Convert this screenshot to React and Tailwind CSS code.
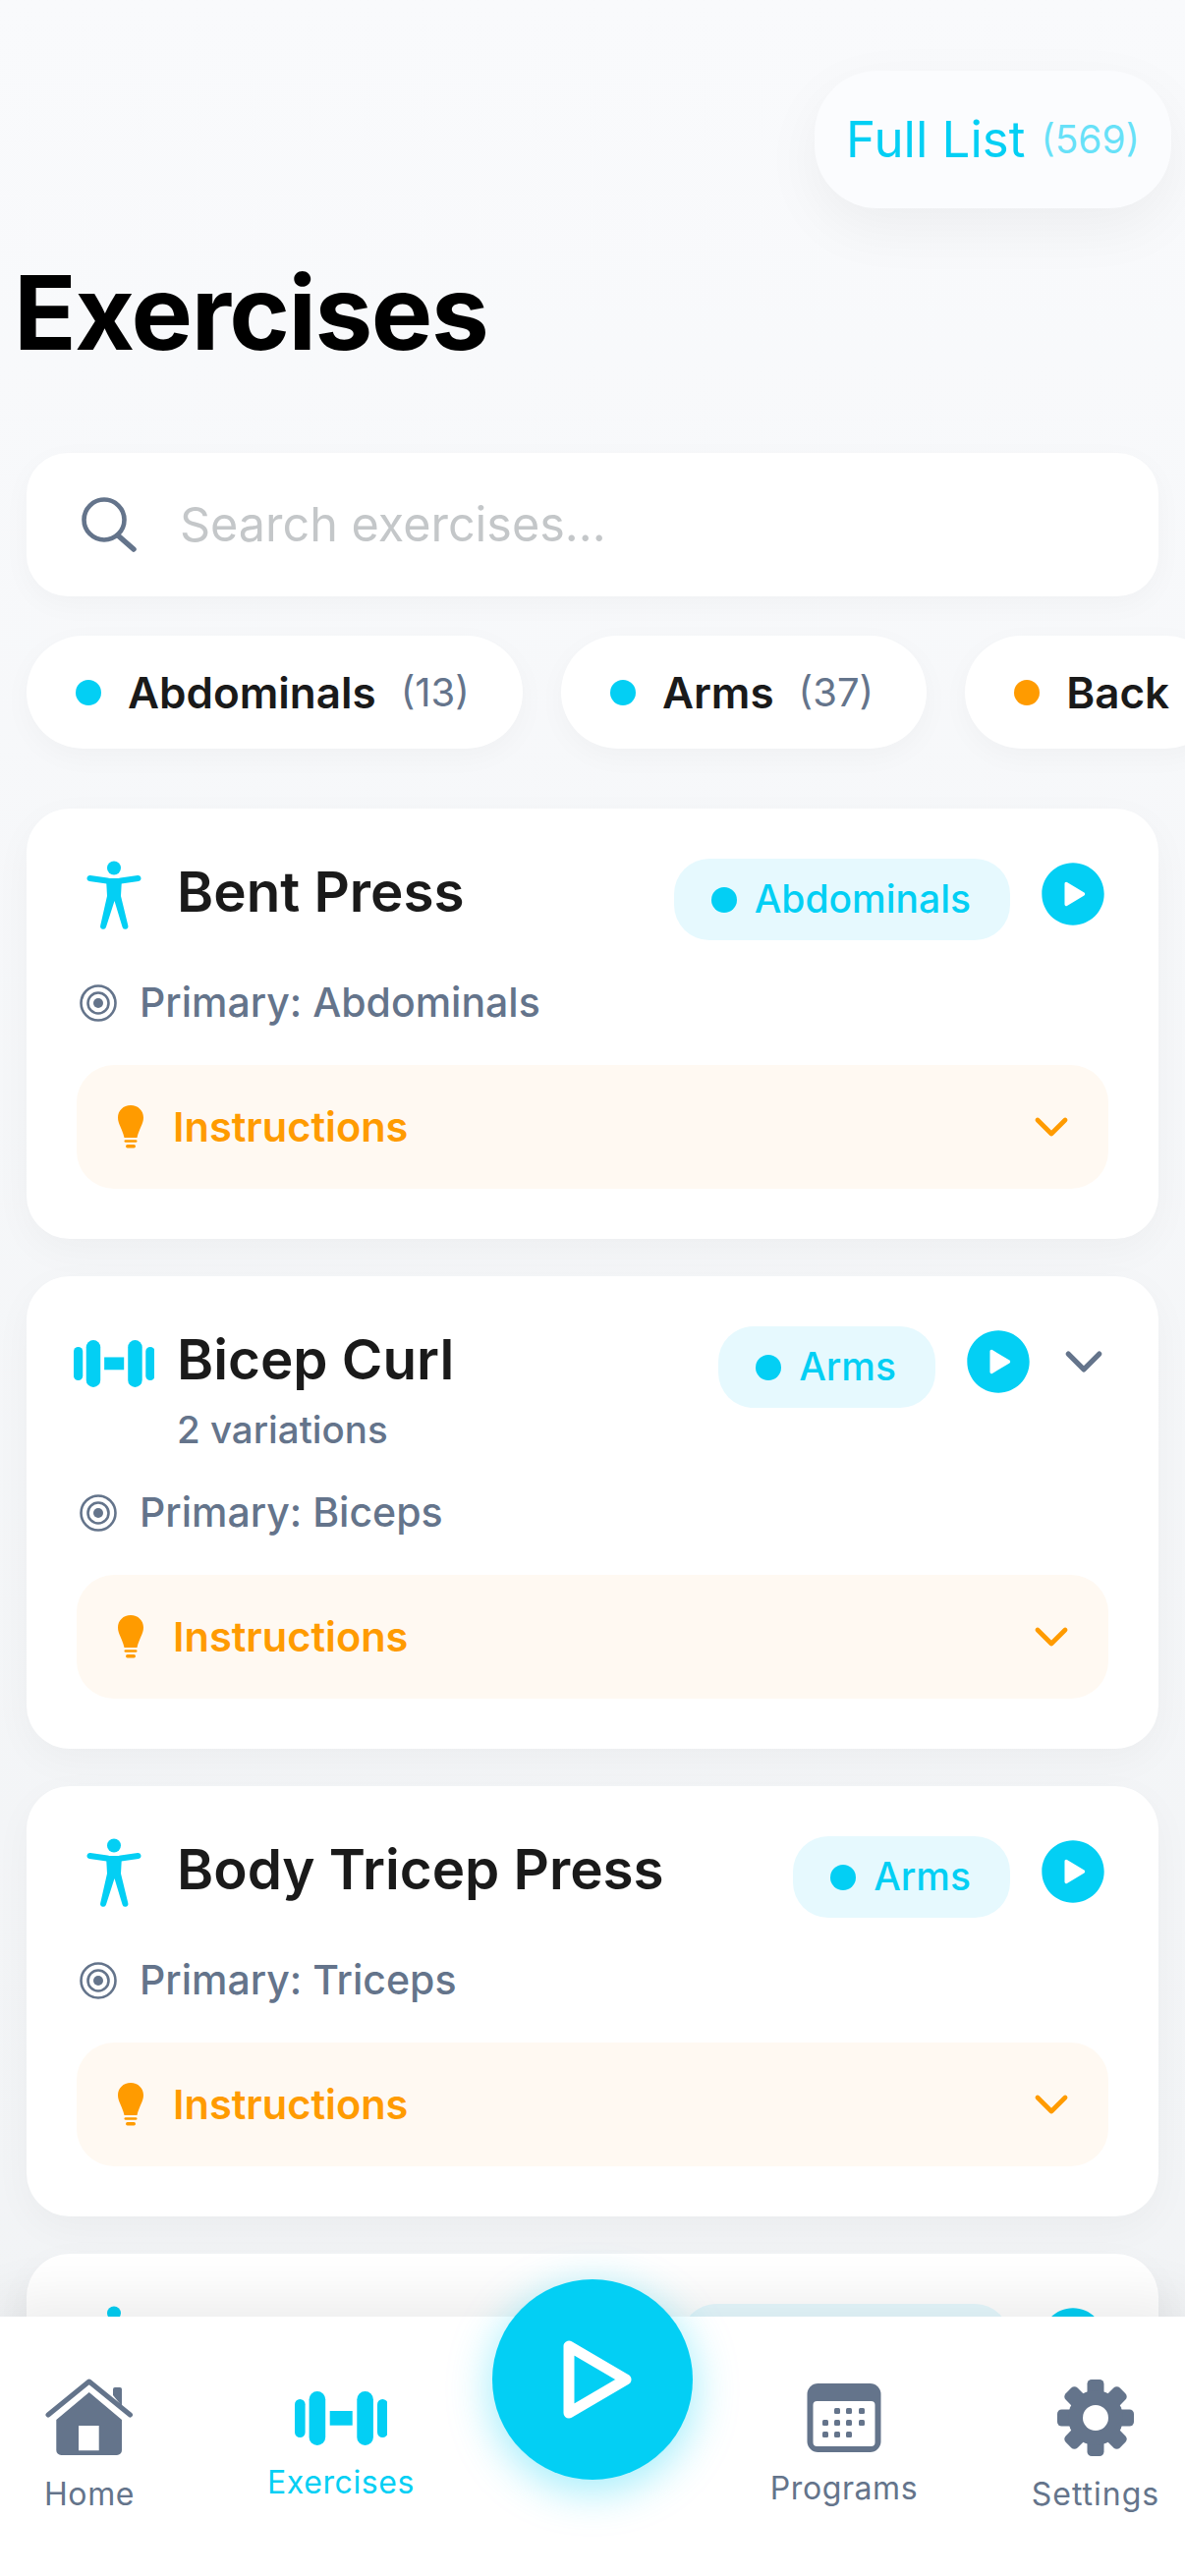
import { IoChevronDown, IoPlayCircle } from "react-icons/io5";

const CYAN = "#03cff4";
const SLATE = "#64748b";

const chips = [
  { name: "Abdominals", count: "(13)", dot: "bg-[#03cff4]" },
  { name: "Arms", count: "(37)", dot: "bg-[#03cff4]" },
  { name: "Back", count: "", dot: "bg-[#ff9b00]" },
];

const exercises = [
  { name: "Bent Press", icon: "body", muscle: "Abdominals", primary: "Abdominals" },
  { name: "Bicep Curl", icon: "barbell", muscle: "Arms", primary: "Biceps", variations: "2 variations" },
  { name: "Body Tricep Press", icon: "body", muscle: "Arms", primary: "Triceps" },
];

const TargetIcon = () => (
  <svg width="38" height="38" viewBox="0 0 38 38" fill="none" className="shrink-0">
    <circle cx="19" cy="19" r="17.5" stroke={SLATE} strokeWidth="2.6" />
    <circle cx="19" cy="19" r="10.5" stroke={SLATE} strokeWidth="2.6" />
    <circle cx="19" cy="19" r="5" fill={SLATE} />
  </svg>
);

const SearchIcon = () => (
  <svg width="56" height="56" viewBox="0 0 56 56" fill="none" stroke={SLATE} strokeWidth="4.6" strokeLinecap="round">
    <circle cx="23" cy="23" r="20.5" />
    <path d="M37 39 L53 53" strokeWidth="5.5" />
  </svg>
);

const BodyIcon = () => (
  <svg width="60" height="72" viewBox="0 0 60 72" fill={CYAN} className="shrink-0">
    <circle cx="30" cy="7.5" r="7" />
    <path d="M5.5 18 L23 20.5 M54.5 18 L37 20.5" stroke={CYAN} strokeWidth="6" strokeLinecap="round" />
    <path d="M22 18 L38 18 L37 36 L44.3 66 a3 3 0 0 1 -5.8 1.6 L30.5 41 L22 67.6 a3 3 0 0 1 -5.8 -1.6 L23 36 Z" />
  </svg>
);

const Dumbbell = ({ width, height }) => (
  <svg width={width} height={height} viewBox="0 0 94 55" fill={CYAN} className="shrink-0">
    <rect x="0" y="8" width="10.6" height="39" rx="5.3" />
    <rect x="14.6" y="0" width="16.6" height="55" rx="8.3" />
    <rect x="35.7" y="20" width="23" height="14.7" />
    <rect x="63.3" y="0" width="16.6" height="55" rx="8.3" />
    <rect x="84" y="8" width="10.6" height="39" rx="5.3" />
  </svg>
);

const BulbIcon = () => (
  <svg width="26" height="44" viewBox="0 0 26 44" fill="#ff9b00">
    <path d="M13 0 C5.5 0 0 5.5 0 12.5 C0 19 4.5 24 6.5 33 H19.5 C21.5 24 26 19 26 12.5 C26 5.5 20.5 0 13 0 Z" />
    <rect x="6.5" y="35.2" width="13" height="2.6" rx="1.3" />
    <rect x="8" y="40" width="10" height="3.4" rx="1.7" />
  </svg>
);

const HomeIcon = () => (
  <svg width="92" height="80" viewBox="0 0 92 80" fill={SLATE}>
    <path d="M4 37 L45.7 3 L87.5 37" fill="none" stroke={SLATE} strokeWidth="5" strokeLinecap="round" strokeLinejoin="round" />
    <path d="M70 17 V11 a2 2 0 0 1 2 -2 h5 a2 2 0 0 1 2 2 V28 Z" />
    <path
      fillRule="evenodd"
      d="M45.7 14 L79 42 V73 a5 5 0 0 1 -5 5 H17.3 a5 5 0 0 1 -5 -5 V42 Z M35 48 V73.3 H55.7 V48 Z"
    />
  </svg>
);

const CalendarIcon = () => (
  <svg width="76" height="70" viewBox="0 0 76 70">
    <rect x="0.5" y="0" width="75" height="70" rx="11" fill={SLATE} />
    <rect x="6.5" y="18" width="63" height="46" rx="4" fill="#fff" />
    {[
      [31, 28], [43, 28], [56, 28],
      [19, 40], [31, 40], [43, 40], [56, 40],
      [19, 52], [31, 52], [43, 52],
    ].map(([x, y]) => (
      <rect key={`${x}-${y}`} x={x - 3} y={y - 3} width="6" height="6" rx="1.5" fill={SLATE} />
    ))}
  </svg>
);

const GearIcon = () => (
  <svg width="78" height="80" viewBox="0 0 78 80" fill={SLATE}>
    {[0, 45, 90, 135, 180, 225, 270, 315].map((deg) => (
      <rect key={deg} x="30.5" y="1" width="17" height="20" rx="4.5" transform={`rotate(${deg} 39 40)`} />
    ))}
    <circle cx="39" cy="40" r="28" />
    <circle cx="39" cy="40" r="13" fill="#fff" />
  </svg>
);

const ExerciseIcon = ({ type }) => (
  <div className="w-[76px] h-[76px] shrink-0 flex items-center justify-center">
    {type === "barbell" ? <Dumbbell width={82} height={48} /> : <BodyIcon />}
  </div>
);

const Badge = ({ muscle }) => (
  <div className="h-[83px] pl-[38px] pr-[40px] rounded-[36px] bg-[#e6f9fe] flex items-center gap-[18px] shrink-0">
    <span className="w-[26px] h-[26px] rounded-full bg-[#03cff4]"></span>
    <span className="text-[39px] font-medium text-[#03cff4]">{muscle}</span>
  </div>
);

const ExerciseCard = ({ item }) => (
  <div className="bg-white rounded-[44px] px-[51px] pt-[51px] pb-[51px] shadow-[0_12px_40px_rgba(0,0,0,0.035)]">
    <div className="flex items-start">
      <ExerciseIcon type={item.icon} />
      <div className="ml-[26px] pt-[1px] flex-1 min-w-0">
        <div className="text-[56.5px] leading-[66px] font-semibold text-[#1a1a1a]">{item.name}</div>
        {item.variations && (
          <div className="mt-[16px] text-[38.5px] leading-[44px] font-medium text-[#64748b]">{item.variations}</div>
        )}
      </div>
      <Badge muscle={item.muscle} />
      <IoPlayCircle size={78} color={CYAN} className={`ml-[24.5px] -mt-[3px] shrink-0 ${item.variations ? "" : "-mr-[2.5px]"}`} />
      {item.variations && <IoChevronDown size={56} color={SLATE} className="ml-[20.5px] -mr-[3px] mt-[8px] shrink-0" />}
    </div>

    <div className={`${item.variations ? "mt-[39px]" : "mt-[40px]"} pl-[3px] flex items-center gap-[23px] h-[48px]`}>
      <TargetIcon />
      <span className="text-[41px] font-medium text-[#64748b]">Primary: {item.primary}</span>
    </div>

    <div className="mt-[39px] h-[126px] rounded-[38px] bg-[#fff9f2] pl-[42px] pr-[33px] flex items-center justify-between">
      <div className="flex items-center gap-[30px]">
        <BulbIcon />
        <span className="text-[41.5px] font-semibold text-[#ff9b00]">Instructions</span>
      </div>
      <IoChevronDown size={50} color="#ff9b00" />
    </div>
  </div>
);

const NavItem = ({ icon, label, labelClass }) => (
  <div className="w-[182px] h-[80px] flex flex-col items-center">
    <div className="h-[80px] flex items-center justify-center shrink-0">{icon}</div>
    <span className={labelClass}>{label}</span>
  </div>
);

export default function App() {
  return (
    <div className="relative w-[1206px] h-[2622px] overflow-hidden bg-gradient-to-b from-[#f9fafc] to-[#f1f3f5] font-['Inter',sans-serif]">
      <div className="flex justify-end pt-[72px] pr-[14px]">
        <div className="h-[140px] w-[363px] rounded-[64px] bg-[#fbfcfe] shadow-[0_20px_60px_rgba(0,0,0,0.05)] flex items-center justify-center gap-[16px]">
          <span className="text-[51px] text-[#03cff4]">Full List</span>
          <span className="text-[39px] text-[#03cff4]/60">(569)</span>
        </div>
      </div>

      <h1 className="mt-[43px] ml-[14px] text-[105px] leading-[126px] font-bold text-black tracking-[-1.5px]">Exercises</h1>

      <div className="mt-[80px] mx-[27px] h-[146px] rounded-[42px] bg-white shadow-[0_8px_30px_rgba(0,0,0,0.03)] flex items-center pl-[56px]">
        <SearchIcon />
        <span className="ml-[44px] text-[48.5px] text-[#c4c7c9]">Search exercises...</span>
      </div>

      <div className="mt-[40px] pl-[27px] flex gap-[39px]">
        {chips.map((chip) => (
          <div key={chip.name} className="h-[115px] pl-[50px] pr-[54px] rounded-[58px] bg-white shadow-[0_8px_30px_rgba(0,0,0,0.03)] flex items-center shrink-0">
            <span className={`w-[26px] h-[26px] rounded-full ${chip.dot}`}></span>
            <span className="ml-[27px] text-[44px] font-semibold text-[#1a1a1a]">{chip.name}</span>
            {chip.count && <span className="ml-[25px] text-[40px] text-[#64748b]">{chip.count}</span>}
          </div>
        ))}
      </div>

      <div className="mt-[61px] mx-[27px] flex flex-col gap-[38px]">
        {exercises.map((item) => (
          <ExerciseCard key={item.name} item={item} />
        ))}
        {/* next card, mostly hidden by the tab bar */}
        <div className="bg-white rounded-[44px] px-[51px] pt-[51px] h-[438px] shadow-[0_12px_40px_rgba(0,0,0,0.035)] flex items-start">
          <ExerciseIcon type="body" />
          <div className="flex-1"></div>
          <div className="h-[83px] w-[335px] rounded-[36px] bg-[#e6f9fe]"></div>
          <IoPlayCircle size={78} color={CYAN} className="ml-[24.5px] -mt-[3px] -mr-[2.5px] shrink-0" />
        </div>
      </div>

      {/* tab bar */}
      <div className="absolute left-0 right-0 bottom-0 h-[264px] bg-white shadow-[0_-20px_50px_rgba(0,0,0,0.07)] flex justify-between items-start pt-[63px]">
        <NavItem icon={<HomeIcon />} label="Home" labelClass="mt-[18px] text-[32px] leading-[40px] tracking-[0.6px] text-[#64748b]" />
        <NavItem icon={<Dumbbell width={94} height={55} />} label="Exercises" labelClass="mt-[6px] text-[32px] leading-[40px] tracking-[0.6px] text-[#03cff4]" />
        <div className="w-[182px]"></div>
        <NavItem icon={<CalendarIcon />} label="Programs" labelClass="mt-[12px] text-[32px] leading-[40px] tracking-[0.6px] text-[#64748b]" />
        <NavItem icon={<GearIcon />} label="Settings" labelClass="mt-[18px] text-[32px] leading-[40px] tracking-[1px] text-[#64748b]" />

        <div className="absolute left-[501px] -top-[38px] w-[204px] h-[204px] rounded-full bg-[#03cff4] shadow-[0_10px_45px_rgba(3,207,244,0.4)] flex items-center justify-center">
          <svg width="70" height="80" viewBox="0 0 70 80" fill="none" stroke="#fff" strokeWidth="11" strokeLinejoin="round" className="ml-[10px]">
            <path d="M6 6 V74 L64 40 Z" />
          </svg>
        </div>
      </div>
    </div>
  );
}
